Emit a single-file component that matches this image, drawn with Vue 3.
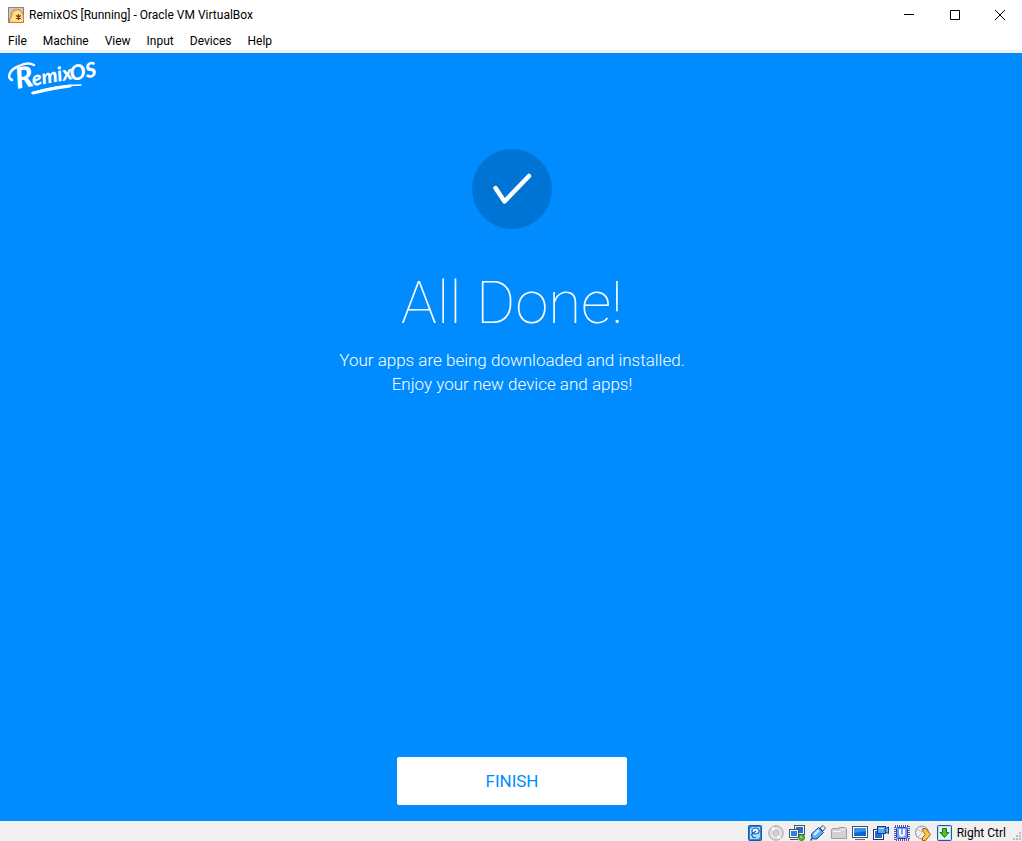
<script setup>
const menus = ['File', 'Machine', 'View', 'Input', 'Devices', 'Help']
</script>

<template>
  <div class="window">
    <header class="titlebar">
      <svg class="app-icon" width="16" height="16" viewBox="0 0 16 16" aria-hidden="true">
        <rect width="16" height="16" fill="#8f8376" />
        <rect x="1" y="1" width="14" height="14" fill="#cfc7b9" />
        <path d="M1.500 15V12L3 10L3.500 6L6 3L11 2.500L14 5L15.500 9V15.500H2Z" fill="#fbcf73" stroke="#d07a40" />
        <path d="M4 14V11L6 8L7 4.500L11 4L14 7L15 13L12 15Z" fill="#ffe28c" />
        <path d="M10.500 7V13M8 8.500L13 11.500M13 8.500L8 11.500" stroke="#7b2e14" stroke-width="1.200" />
      </svg>
      <h1 class="title">RemixOS [Running] - Oracle VM VirtualBox</h1>
      <div class="controls">
        <button type="button" aria-label="Minimize">
          <svg width="10" height="10" viewBox="0 0 10 10"><path d="M0 4.500H10" /></svg>
        </button>
        <button type="button" aria-label="Maximize">
          <svg width="10" height="10" viewBox="0 0 10 10"><path d="M.5 .5H9.500V9.500H.5Z" /></svg>
        </button>
        <button type="button" aria-label="Close">
          <svg width="10" height="10" viewBox="0 0 10 10"><path d="M0 0L10 10M10 0L0 10" /></svg>
        </button>
      </div>
    </header>

    <nav class="menubar">
      <button v-for="m in menus" :key="m" type="button">{{ m }}</button>
    </nav>

    <main class="screen">
      <svg class="logo" width="108" height="44" viewBox="0 -4 108 44" role="img" aria-label="Remix OS">
        <g fill="none" stroke="#fff" stroke-linecap="round">
          <path d="M8 23C2 21 6 12 15 9C21 6 26 6 30 8" stroke-width="2.500" />
          <path d="M28 36C43 31 60 28 77 28" stroke-width="1.500" />
          <path d="M29 36C41 33 53 30.500 66 29" stroke-width="3" />
        </g>
        <g class="logo-text">
          <text x="13" y="32" font-size="29" transform="rotate(-10 13 32)">R</text>
          <text x="29" y="29" font-size="20" transform="rotate(-10 29 29)">emix</text>
          <text x="67" y="24" font-size="21" transform="rotate(-10 67 24)">OS</text>
        </g>
      </svg>

      <section class="message">
        <svg class="check" width="80" height="80" viewBox="0 0 80 80" aria-hidden="true">
          <circle cx="40" cy="40" r="40" fill="#0074d4" />
          <path d="M23.500 39L32.500 52.500L57 27" fill="none" stroke="#fff" stroke-width="4.500" stroke-linecap="round" stroke-linejoin="round" />
        </svg>
        <h2>All Done!</h2>
        <p>Your apps are being downloaded and installed.<br />Enjoy your new device and apps!</p>
      </section>

      <button class="finish" type="button">FINISH</button>
    </main>

    <footer class="statusbar">
      <svg width="16" height="16" viewBox="0 0 16 16" aria-label="Hard disks">
        <rect x="1.500" y=".5" width="13" height="15" rx="1" fill="#2386e6" stroke="#1258a8" />
        <path d="M3 4L5 2H13V12L11 14H3Z" fill="#b5ddfa" />
        <ellipse cx="8.500" cy="6" rx="3.500" ry="3" fill="#f3fbff" stroke="#1764b8" stroke-width="1.200" />
        <path d="M9 6L4.500 9.500L6 12.500H9" fill="none" stroke="#1764b8" stroke-width="1.200" />
      </svg>
      <svg width="16" height="16" viewBox="0 0 16 16" aria-label="Optical drives">
        <circle cx="8" cy="8" r="7.200" fill="#e1e1e1" stroke="#a2a2a2" />
        <path d="M8 8L3 3L6 2ZM8 8L13 13L10 14Z" fill="#fff" />
        <circle cx="8" cy="8" r="2.500" fill="#eee" stroke="#a8a8a8" />
        <circle cx="8" cy="8" r=".8" fill="#999" />
      </svg>
      <svg width="16" height="16" viewBox="0 0 16 16" aria-label="Network">
        <rect x="5.500" y=".5" width="10" height="9" fill="#f2f2f2" stroke="#4b5260" />
        <rect x="7" y="2" width="7" height="6" fill="#1d6fd2" />
        <rect x=".5" y="4.500" width="9" height="8" fill="#f2f2f2" stroke="#4b5260" />
        <rect x="2" y="6" width="6" height="5" fill="#2d83e0" />
        <path d="M1 14.500H9" stroke="#4b5260" />
        <circle cx="12.500" cy="12.500" r="3" fill="#57b947" stroke="#257d20" />
        <circle cx="12" cy="12" r="1" fill="#a2e28e" />
      </svg>
      <svg width="16" height="16" viewBox="0 0 16 16" aria-label="USB">
        <path d="M10 3L13 .5L15.500 3L13 6Z" fill="#eee" stroke="#35588f" />
        <path d="M8.500 2.500L13.500 7.500L7 14L3.500 14L1.500 12V9Z" fill="#5cacf4" stroke="#164f9d" />
        <path d="M9 5L4 10" stroke="#c9e9ff" stroke-width="2.500" />
        <path d="M2.500 13L.5 15.500" stroke="#164f9d" stroke-width="1.500" />
      </svg>
      <svg width="16" height="16" viewBox="0 0 16 16" aria-label="Shared folders">
        <path d="M.5 13.500V4.500L2 3.500H7L9 2.500H14L15.500 4V13.500Z" fill="#d2d2d2" stroke="#a0a0a0" />
        <path d="M2 6.500H9L10.500 4.500H14" fill="none" stroke="#f8f8f8" />
      </svg>
      <svg width="16" height="16" viewBox="0 0 16 16" aria-label="Display">
        <rect x=".5" y="1.500" width="15" height="11" fill="#fff" stroke="#484f5c" />
        <rect x="2" y="3" width="12" height="8" fill="#0868d2" />
        <path d="M2 3H14V6L2 8Z" fill="#3894ec" />
        <path d="M3 14.500H13" stroke="#6b717a" />
      </svg>
      <svg width="16" height="16" viewBox="0 0 16 16" aria-label="Recording">
        <rect x=".5" y="4.500" width="10" height="10" fill="#fff" stroke="#26336e" />
        <rect x="2" y="6" width="7" height="7" fill="#216ed0" />
        <rect x="4.500" y="1.500" width="8" height="7" fill="#5ba9f4" stroke="#173a91" />
        <path d="M12 4L15.500 2V8.500L12 6.500Z" fill="#75b8f5" stroke="#173a91" />
        <path d="M6 3.500H11" stroke="#c5e6ff" />
      </svg>
      <svg width="16" height="16" viewBox="0 0 16 16" aria-label="Processor">
        <rect x="1" y="1" width="14" height="14" fill="none" stroke="#4c56b4" stroke-width="2" stroke-dasharray="1 1" />
        <rect x="2.500" y="2.500" width="11" height="11" rx="1" fill="#7c9eea" stroke="#3142ad" />
        <path d="M6 4V8.500C6 11.500 10 11.500 10 8.500V4" fill="none" stroke="#fff" stroke-width="2" />
      </svg>
      <svg width="16" height="16" viewBox="0 0 16 16" aria-label="Mouse integration">
        <circle cx="7" cy="7.500" r="6.500" fill="#f0f0f0" stroke="#8a8a8a" />
        <path d="M7 1V7L2 4M7 8L3 12" stroke="#c0c0c0" fill="none" />
        <path d="M8 3.500H10.500L15.500 9.500L10.500 15.500H7.500V12.500L10.500 9.500L8 6.500Z" fill="#ffc64b" stroke="#9b5911" />
      </svg>
      <svg width="16" height="16" viewBox="0 0 16 16" aria-label="Keyboard capture">
        <rect x="1.500" y=".5" width="14" height="15" rx="1" fill="#bde0fa" stroke="#1c589c" />
        <rect x="3" y="2" width="11" height="12" fill="#eef8ff" />
        <path d="M6.500 3.500H10.500V7.500H13L8.500 12.500L4 7.500H6.500Z" fill="#4fc22d" stroke="#19760c" />
      </svg>
      <span class="host-key">Right Ctrl</span>
      <svg class="grip" width="9" height="9" viewBox="0 0 9 9" aria-hidden="true">
        <path d="M6 0h2v2H6zM3 3h2v2H3zM6 3h2v2H6zM0 6h2v2H0zM3 6h2v2H3zM6 6h2v2H6z" fill="#bbb" />
      </svg>
    </footer>
  </div>
</template>

<style>
body {
  margin: 0;
}
</style>

<style scoped>
.window {
  min-height: 100vh;
  display: flex;
  flex-direction: column;
  background: #fff;
  color: #000;
  font: 12px/16px Roboto, "Open Sans", sans-serif;
}

button {
  border: 0;
  padding: 0;
  background: none;
  color: inherit;
  font: inherit;
}

.titlebar {
  height: 30px;
  display: flex;
  align-items: center;
  padding-left: 8px;
  gap: 5px;
}

.title {
  flex: 1;
  margin: 0;
  font-size: 12px;
  font-weight: 400;
}

.controls {
  display: flex;
  align-self: stretch;
}

.controls button {
  width: 46px;
  display: grid;
  place-items: center;
}

.controls button:last-child {
  width: 44px;
}

.controls path {
  fill: none;
  stroke: #000;
}

.menubar {
  height: 18px;
  display: flex;
  align-items: center;
  gap: 16px;
  padding: 2px 0 0 8px;
  border-bottom: 3px solid #f0f0f0;
}

.screen {
  flex: 1;
  display: flex;
  flex-direction: column;
  align-items: center;
  padding: 0 2px 16px 4px;
  background: #008cff;
  color: #fff;
  font-family: Roboto, sans-serif;
}

.logo {
  align-self: flex-start;
  overflow: visible;
}

.logo-text {
  fill: #fff;
  font-family: Lato, sans-serif;
  font-weight: 900;
  font-style: italic;
}

.message {
  flex: 1;
  display: flex;
  flex-direction: column;
  align-items: center;
  padding-top: 52px;
  text-align: center;
}

h2 {
  margin: 36px 0 7px;
  font-size: 60px;
  line-height: 76px;
  font-weight: 100;
}

p {
  margin: 0;
  font-size: 17px;
  line-height: 24px;
  font-weight: 300;
}

.finish {
  width: 230px;
  height: 48px;
  border-radius: 2px;
  background: #fff;
  color: #008cff;
  font-size: 17px;
}

.statusbar {
  height: 20px;
  display: flex;
  align-items: center;
  justify-content: flex-end;
  gap: 5px;
  padding-top: 3px;
  box-sizing: border-box;
  background: #f0f0f0;
}

.grip {
  align-self: flex-end;
  margin-left: 2px;
}
</style>
